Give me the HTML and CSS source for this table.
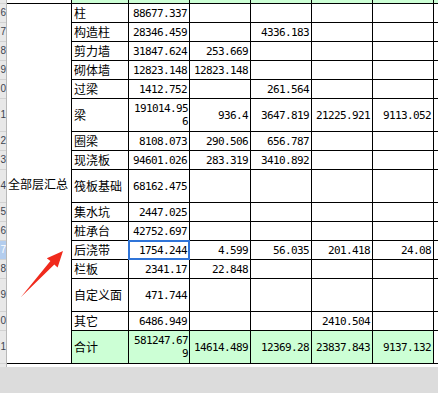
FILE: index.html
```html
<!DOCTYPE html>
<html>
<head>
<meta charset="utf-8">
<link rel="stylesheet" href="styles.css">
</head>
<body>
<div class="sheet">
  <div class="rowheads">
    <div class="rh"></div>
    <div class="rh">6</div>
    <div class="rh">7</div>
    <div class="rh">8</div>
    <div class="rh">9</div>
    <div class="rh">0</div>
    <div class="rh">1</div>
    <div class="rh">2</div>
    <div class="rh">3</div>
    <div class="rh">4</div>
    <div class="rh">5</div>
    <div class="rh">6</div>
    <div class="rh sel">7</div>
    <div class="rh">8</div>
    <div class="rh">9</div>
    <div class="rh">0</div>
    <div class="rh">1</div>
    <div class="rh"></div>
  </div>
  <div class="gridwrap">
    <div class="grid">
      <div class="c"></div>
      <div class="c g"></div><div class="c g"></div><div class="c g"></div><div class="c g"></div><div class="c g"></div><div class="c g"></div><div class="c g"></div>

      <div class="c merged">全部层汇总</div>

      <div class="c n">柱</div><div class="c v">88677.337</div><div class="c v"></div><div class="c v"></div><div class="c v"></div><div class="c v"></div><div class="c"></div>
      <div class="c n">构造柱</div><div class="c v">28346.459</div><div class="c v"></div><div class="c v">4336.183</div><div class="c v"></div><div class="c v"></div><div class="c"></div>
      <div class="c n">剪力墙</div><div class="c v">31847.624</div><div class="c v">253.669</div><div class="c v"></div><div class="c v"></div><div class="c v"></div><div class="c"></div>
      <div class="c n">砌体墙</div><div class="c v">12823.148</div><div class="c v">12823.148</div><div class="c v"></div><div class="c v"></div><div class="c v"></div><div class="c"></div>
      <div class="c n">过梁</div><div class="c v">1412.752</div><div class="c v"></div><div class="c v">261.564</div><div class="c v"></div><div class="c v"></div><div class="c"></div>
      <div class="c n">梁</div><div class="c v wrap">191014.956</div><div class="c v">936.4</div><div class="c v">3647.819</div><div class="c v">21225.921</div><div class="c v">9113.052</div><div class="c"></div>
      <div class="c n">圈梁</div><div class="c v">8108.073</div><div class="c v">290.506</div><div class="c v">656.787</div><div class="c v"></div><div class="c v"></div><div class="c"></div>
      <div class="c n">现浇板</div><div class="c v">94601.026</div><div class="c v">283.319</div><div class="c v">3410.892</div><div class="c v"></div><div class="c v"></div><div class="c"></div>
      <div class="c n">筏板基础</div><div class="c v">68162.475</div><div class="c v"></div><div class="c v"></div><div class="c v"></div><div class="c v"></div><div class="c"></div>
      <div class="c n">集水坑</div><div class="c v">2447.025</div><div class="c v"></div><div class="c v"></div><div class="c v"></div><div class="c v"></div><div class="c"></div>
      <div class="c n">桩承台</div><div class="c v">42752.697</div><div class="c v"></div><div class="c v"></div><div class="c v"></div><div class="c v"></div><div class="c"></div>
      <div class="c n">后浇带</div><div class="c v active">1754.244</div><div class="c v">4.599</div><div class="c v">56.035</div><div class="c v">201.418</div><div class="c v">24.08</div><div class="c"></div>
      <div class="c n">栏板</div><div class="c v">2341.17</div><div class="c v">22.848</div><div class="c v"></div><div class="c v"></div><div class="c v"></div><div class="c"></div>
      <div class="c n">自定义面</div><div class="c v">471.744</div><div class="c v"></div><div class="c v"></div><div class="c v"></div><div class="c v"></div><div class="c"></div>
      <div class="c n">其它</div><div class="c v">6486.949</div><div class="c v"></div><div class="c v"></div><div class="c v">2410.504</div><div class="c v"></div><div class="c"></div>
      <div class="c n g">合计</div><div class="c v g wrap">581247.679</div><div class="c v g">14614.489</div><div class="c v g">12369.28</div><div class="c v g">23837.843</div><div class="c v g">9137.132</div><div class="c"></div>
    </div>
  </div>
  <svg class="arrow" width="70" height="60" viewBox="0 0 70 60">
    <polygon points="63,1 57.6,17.5 54.3,14.6 21,47 50.4,11 46.8,8.2" fill="#f02a1c"/>
  </svg>
</div>
<div class="footer"></div>
</body>
</html>
```

FILE: styles.css
```css
html, body {
  margin: 0;
  padding: 0;
  background: #ffffff;
  width: 438px;
  height: 393px;
  overflow: hidden;
}

.sheet {
  position: relative;
  display: flex;
  height: 367px;
  background: #ffffff;
}

.rowheads {
  width: 6px;
  border-right: 1px solid #b8b8b8;
  display: grid;
  grid-template-rows: 3px repeat(5, 18px) 32px 18px 18px 32px repeat(4, 18px) 32px 18px 32px 3px;
  row-gap: 1px;
  background: #d2d2d2;
  overflow: hidden;
  align-content: start;
}

.rh {
  background: #e8e8e8;
  color: #3c4450;
  font-family: "Liberation Sans", Arial, sans-serif;
  font-size: 10px;
  display: flex;
  align-items: center;
  justify-content: flex-end;
  white-space: nowrap;
  line-height: 12px;
}

.rh.sel {
  background: #b3cdee;
  color: #ffffff;
}

.gridwrap {
  flex: 1;
}

.grid {
  display: grid;
  grid-template-columns: 64px 56px 60px 60px 60px 60px 60px 4px;
  grid-template-rows: 3px repeat(5, 18px) 32px 18px 18px 32px repeat(4, 18px) 32px 18px 32px;
  gap: 1px;
  background: #000000;
  border-bottom: 1px solid #000000;
}

.c {
  background: #ffffff;
  display: flex;
  align-items: center;
  overflow: hidden;
  min-width: 0;
}

.c.g {
  background: #ccffd5;
}

.merged {
  grid-row: span 16;
  padding-left: 1px;
  font-family: "Noto Sans CJK SC", sans-serif;
  font-size: 12px;
  line-height: 14px;
  white-space: nowrap;
}

.n {
  padding-left: 2px;
  font-family: "Noto Sans CJK SC", sans-serif;
  font-size: 12px;
  line-height: 14px;
  white-space: nowrap;
}

.v {
  justify-content: flex-end;
  text-align: right;
  padding: 0 2px 0 2px;
  font-family: "DejaVu Sans Mono", "Liberation Mono", monospace;
  font-size: 11px;
  letter-spacing: -0.62px;
  line-height: 13px;
  white-space: nowrap;
}

.v.wrap {
  white-space: normal;
  word-break: break-all;
  padding-left: 0;
  padding-right: 1px;
}

.active {
  position: relative;
  overflow: visible;
}

.active::after {
  content: "";
  position: absolute;
  left: -1px;
  top: -1px;
  right: -1px;
  bottom: -1px;
  border: 2px solid #2f74d8;
}

.arrow {
  position: absolute;
  left: 0;
  top: 250px;
}

.footer {
  height: 26px;
  background: #dcdcdc;
}
```
